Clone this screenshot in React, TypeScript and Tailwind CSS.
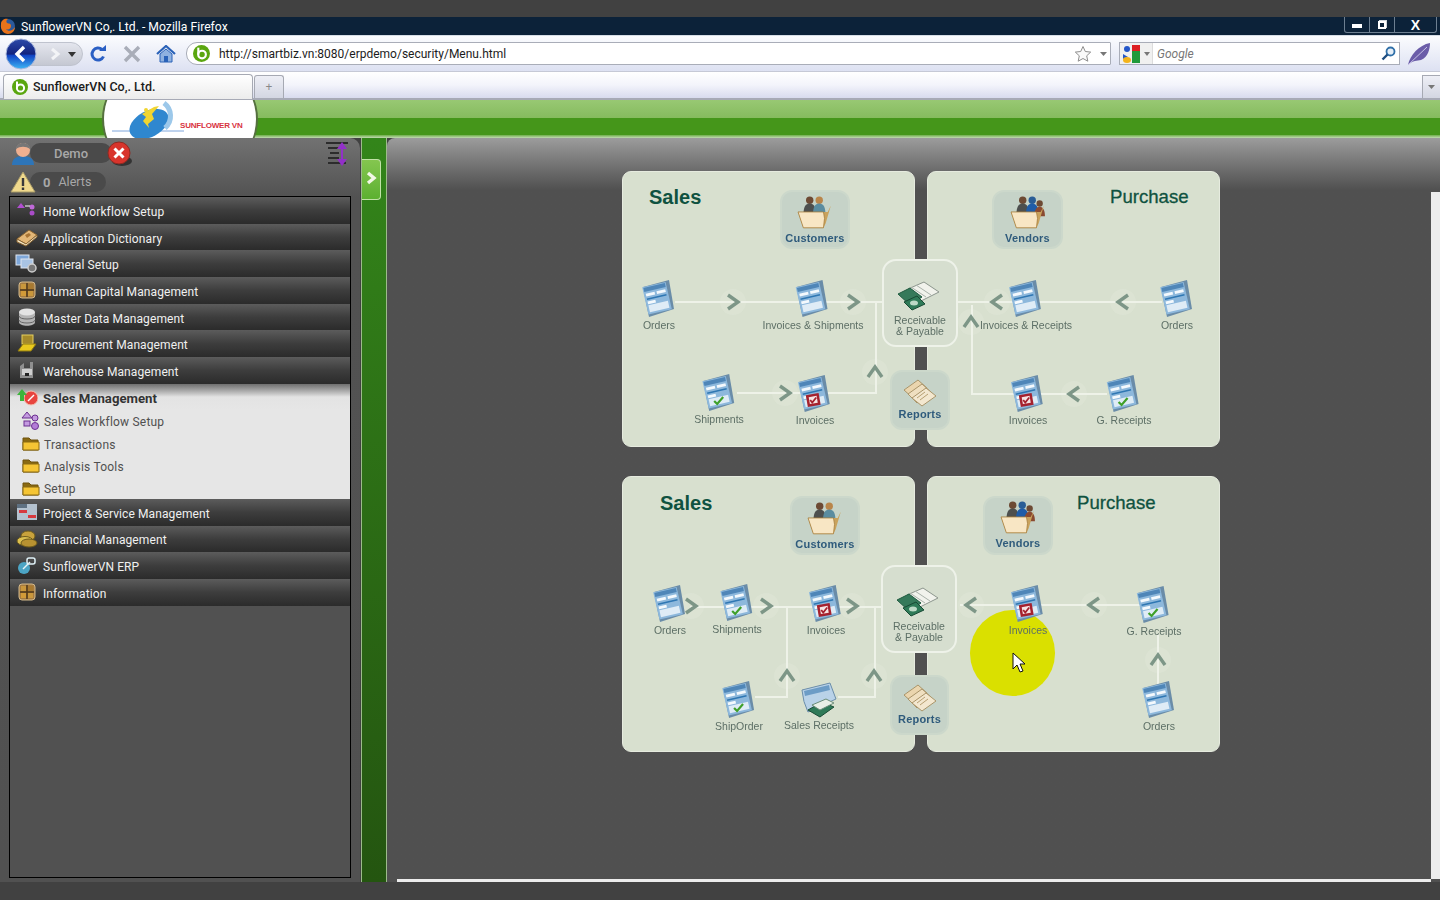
import type { ReactNode } from "react"

const UI = "font-['Roboto',sans-serif]"
const ARIAL = "font-['Liberation_Sans',sans-serif]"

function Favicon({ size = 16 }: { size?: number }) {
  return (
    <svg width={size} height={size} viewBox="0 0 16 16">
      <circle cx="8" cy="8" r="8" fill="#5aa60f" />
      <circle cx="8.5" cy="9" r="3.6" fill="none" stroke="#fff" strokeWidth="2" />
      <path d="M5 2.5V9" stroke="#fff" strokeWidth="2" />
    </svg>
  )
}

function FirefoxIcon() {
  return (
    <svg width="16" height="16" viewBox="0 0 16 16">
      <circle cx="8" cy="8" r="7" fill="#2c5a9c" />
      <path d="M1 6C1 2 5 0 8 1c-2 1-2 3-1 4 2 1 4 0 4 3s-3 4-5 3c2 3 7 2 9-2 0 4-3 7-7 7S0 12 1 6Z" fill="#e8731a" />
    </svg>
  )
}

function WindowControls() {
  return (
    <div className="flex h-[16px] border border-t-0 border-[#6d7f91] rounded-b-[3px] mr-[3px] w-[93px]">
      <div className="w-[25px] flex items-center justify-center border-r border-[#6d7f91]">
        <div className="w-[10px] h-[4px] mt-[3px] bg-white" />
      </div>
      <div className="w-[25px] flex items-center justify-center border-r border-[#6d7f91]">
        <div className="w-[8px] h-[8px] border-2 border-white shadow-[1px_-1px_0_#cfd6dc]" />
      </div>
      <div className={`flex-1 flex items-center justify-center text-white font-bold text-[14px] leading-none ${ARIAL}`}>X</div>
    </div>
  )
}

function NavButtons() {
  return (
    <div className="relative flex items-center w-[80px] h-[32px] ml-[5px]">
      <div className="absolute left-[10px] w-[68px] h-[24px] rounded-r-full bg-gradient-to-b from-[#e4e6ee] to-[#c5c8d2] border border-[#bfc3ce]" />
      <svg className="absolute left-[43px] top-[9px]" width="14" height="14" viewBox="0 0 14 14">
        <path d="M4 2l6 5-6 5" fill="none" stroke="#f3f4f7" strokeWidth="3" />
      </svg>
      <svg className="absolute left-[63px] top-[14px]" width="8" height="5" viewBox="0 0 8 5">
        <path d="M0 0h8L4 5Z" fill="#333" />
      </svg>
      <svg className="relative" width="32" height="32" viewBox="0 0 32 32">
        <defs>
          <linearGradient id="backBlue" x1="0" y1="0" x2="0" y2="1">
            <stop offset="0" stopColor="#2d4aa8" />
            <stop offset="0.5" stopColor="#12237f" />
            <stop offset="0.55" stopColor="#1144c4" />
            <stop offset="1" stopColor="#3db6f5" />
          </linearGradient>
        </defs>
        <circle cx="16" cy="16" r="15" fill="url(#backBlue)" stroke="#a9b8dd" />
        <path d="M19 9l-7 7 7 7" fill="none" stroke="#fff" strokeWidth="3.4" />
      </svg>
    </div>
  )
}

function Toolbar() {
  return (
    <div className="h-[36px] flex items-center bg-gradient-to-b from-[#fbfcfe] to-[#dde1f2] border-b border-[#c6c9d6]">
      <NavButtons />
      <svg className="ml-[4px]" width="18" height="18" viewBox="0 0 18 18">
        <path d="M14.5 11.5A6 6 0 1 1 13 4.5" fill="none" stroke="#2a5fc4" strokeWidth="3" />
        <path d="M10 6h7V0Z" fill="#2a5fc4" />
      </svg>
      <svg className="ml-[16px]" width="18" height="18" viewBox="0 0 18 18">
        <path d="M2 2l14 14M16 2L2 16" stroke="#a9adb8" strokeWidth="3.4" />
      </svg>
      <svg className="ml-[15px]" width="20" height="18" viewBox="0 0 20 18">
        <path d="M1 9l9-8 9 8" fill="none" stroke="#2a62b8" strokeWidth="2.2" />
        <path d="M4 9l6-5 6 5v8H4Z" fill="#8fb1e0" stroke="#2a62b8" />
        <rect x="8" y="11" width="4" height="6" fill="#2a62b8" />
      </svg>
      <div className="ml-[10px] w-[925px] h-[23px] flex items-center bg-white border border-[#a9adb8] rounded-l-[11px] rounded-r-[1px]">
        <div className="ml-[6px]"><Favicon size={17} /></div>
        <span className={`ml-[9px] pt-[1px] text-[12px] text-[#1c1c1c] ${UI}`}>http://smartbiz.vn:8080/erpdemo/security/Menu.html</span>
        <svg className="ml-auto" width="18" height="18" viewBox="0 0 18 18">
          <path d="M9 1.5l2.3 5 5.4.6-4 3.7 1.1 5.4L9 13.500l-4.800 2.700 1.100-5.400-4-3.700 5.400-.6Z" fill="#fafafa" stroke="#8e8e8e" />
        </svg>
        <svg className="ml-[8px] mr-[3px]" width="7" height="4" viewBox="0 0 7 4">
          <path d="M0 0h7L3.500 4Z" fill="#777" />
        </svg>
      </div>
      <div className="ml-[8px] w-[281px] h-[23px] flex items-center bg-white border border-[#a9adb8]">
        <div className="w-[33px] h-full flex items-center bg-[#f0f0f0] border-r border-[#dcdcdc]">
          <svg className="ml-[3px]" width="17" height="18" viewBox="0 0 17 18">
            <rect x="9" y="0" width="8" height="6" fill="#dd1e22" />
            <rect x="9" y="6" width="8" height="12" fill="#1f9a3a" />
            <circle cx="4" cy="4" r="3" fill="#2356c9" />
            <path d="M0 9l5 3-5 2Z" fill="#2356c9" />
            <ellipse cx="4" cy="15" rx="4" ry="3" fill="#f3b31b" />
          </svg>
          <svg className="ml-[4px]" width="6" height="4" viewBox="0 0 6 4">
            <path d="M0 0h6L3 4Z" fill="#777" />
          </svg>
        </div>
        <span className={`ml-[4px] pt-[1px] text-[12px] italic text-[#777] ${UI}`}>Google</span>
        <svg className="ml-auto mr-[3px]" width="15" height="15" viewBox="0 0 15 15">
          <circle cx="9.500" cy="5.500" r="4" fill="#e5eef7" stroke="#2f6fa8" strokeWidth="1.800" />
          <path d="M6.500 8.500L1.500 13.500" stroke="#1d4d80" strokeWidth="2.400" />
        </svg>
      </div>
      <svg className="ml-[7px]" width="24" height="24" viewBox="0 0 24 24">
        <path d="M1 23C3 13 12 3 23 1c0 6-2 14-9 17-4 1-8 0-13 5Z" fill="#6a5ca8" />
        <path d="M1 23L20 5" stroke="#c7c1e6" />
      </svg>
    </div>
  )
}

function TabBar() {
  return (
    <div className="h-[28px] flex items-end bg-gradient-to-b from-[#ffffff] via-[#f3f4fb] to-[#d8dbee] border-b-2 border-[#a7aab6] pl-[3px] relative">
      <div className="w-[250px] h-[25px] -mb-[1px] flex items-center bg-gradient-to-b from-[#ffffff] to-[#ececec] border border-b-0 border-[#a6a9b3] rounded-t-[4px] pl-[8px]">
        <Favicon />
        <span className={`ml-[5px] text-[12.5px] font-medium text-[#1b1b1b] ${UI}`}>SunflowerVN Co,. Ltd.</span>
      </div>
      <div className="w-[30px] h-[23px] ml-[1px] flex items-center justify-center bg-gradient-to-b from-[#eeeff6] to-[#d3d6e2] border border-b-0 border-[#a6a9b3] rounded-t-[3px] text-[#888] text-[12px]">+</div>
      <div className="ml-auto w-[18px] h-[23px] flex items-center justify-center bg-gradient-to-b from-[#eeeff6] to-[#d3d6e2] border border-r-0 border-b-0 border-[#a6a9b3]">
        <svg width="7" height="4" viewBox="0 0 7 4"><path d="M0 0h7L3.500 4Z" fill="#777" /></svg>
      </div>
    </div>
  )
}

function AppHeader() {
  return (
    <div className="h-[38px] flex flex-col overflow-hidden">
      <div className="h-[18px] bg-gradient-to-b from-[#98c873] to-[#86bb5e]" />
      <div className="flex-1 bg-[#45961a]" />
      <div className="h-[3px] bg-gradient-to-b from-[#6fae48] to-[#c3dbb3]" />
    </div>
  )
}

function Logo() {
  return (
    <div className="absolute left-[102px] top-0 w-[156px] h-[38px] overflow-hidden">
      <div className="w-[156px] h-[130px] -mt-[46px] bg-white rounded-[50%] border-x-2 border-[#55703f]" />
      <svg className="absolute left-0 top-0" width="156" height="38" viewBox="0 0 156 38">
        <path d="M10 31h72" stroke="#7fa6dc" />
        <ellipse cx="47" cy="24" rx="21" ry="13" fill="#2f87cf" transform="rotate(-28 47 24)" />
        <path d="M62 3c8 6 9 18 1 25" fill="none" stroke="#9cc8ea" strokeWidth="5" />
        <path d="M40 14l12-7 5-1-7 8 2 5-6 5 1 4-6-7 3-4Z" fill="#f1d530" />
        <circle cx="44" cy="10" r="2" fill="#f1d530" />
      </svg>
      <span className={`absolute left-[78px] top-[21px] text-[8px] leading-[10px] font-bold text-[#d8333f] whitespace-nowrap tracking-[-0.2px] ${ARIAL}`}>SUNFLOWER VN</span>
    </div>
  )
}

/* sidebar icons */
const icons: Record<string, ReactNode> = {
  workflow: (
    <svg width="20" height="20" viewBox="0 0 20 20">
      <path d="M4 3l4 5H0Z" fill="#b14fd0" />
      <circle cx="15" cy="7" r="2.500" fill="#c06ad8" />
      <circle cx="15" cy="13" r="2.500" fill="#a94cc8" />
      <path d="M8 6h5" stroke="#fff" />
    </svg>
  ),
  book: (
    <svg width="22" height="20" viewBox="0 0 22 20">
      <path d="M1 12L13 3l8 5-11 9Z" fill="#e3b777" stroke="#8a6430" />
      <path d="M1 12v3l9 4 11-9V8L10 17Z" fill="#f2e4c4" stroke="#8a6430" />
      <path d="M9 8l4-2 2 2-4 3Z" fill="#a87434" />
    </svg>
  ),
  setup: (
    <svg width="24" height="20" viewBox="0 0 24 20">
      <rect x="1" y="1" width="13" height="10" fill="#7ea7d9" stroke="#dfe6ef" />
      <rect x="6" y="5" width="12" height="9" fill="#a9c4e4" stroke="#dfe6ef" />
      <circle cx="17" cy="14" r="4" fill="#777" stroke="#ccc" strokeWidth="1.500" />
    </svg>
  ),
  box: (
    <svg width="20" height="20" viewBox="0 0 20 20">
      <rect x="2" y="2" width="16" height="16" rx="3" fill="#a67b3f" stroke="#d2b98c" />
      <path d="M10 3v14M3 10h14" stroke="#4f3719" strokeWidth="1.500" />
      <rect x="4" y="4" width="5" height="5" fill="#c9973c" />
      <rect x="11" y="11" width="5" height="5" fill="#c9973c" />
      <rect x="4" y="11" width="5" height="5" fill="#d29a38" />
      <rect x="11" y="4" width="5" height="5" fill="#a87a30" />
    </svg>
  ),
  db: (
    <svg width="20" height="20" viewBox="0 0 20 20">
      <path d="M2 5v10c0 5 16 5 16 0V5Z" fill="#b5b5b5" />
      <ellipse cx="10" cy="5" rx="8" ry="3.500" fill="#e4e4e4" />
      <path d="M2 9c0 4 16 4 16 0M2 13c0 4 16 4 16 0" fill="none" stroke="#666" />
    </svg>
  ),
  procure: (
    <svg width="20" height="20" viewBox="0 0 20 20">
      <rect x="5" y="1" width="11" height="9" fill="#a58a2a" stroke="#e5cf5f" />
      <path d="M1 17l5-7h13l-5 7Z" fill="#e9c91d" stroke="#8f7a10" />
    </svg>
  ),
  house: (
    <svg width="20" height="20" viewBox="0 0 20 20">
      <path d="M3 6l4-3v5h6V2h3v16H3Z" fill="#8f8f8f" />
      <rect x="5" y="9" width="10" height="6" fill="#cfcfcf" />
      <rect x="8" y="13" width="4" height="3" fill="#222" />
    </svg>
  ),
  sales: (
    <svg width="22" height="18" viewBox="0 0 22 18">
      <circle cx="15" cy="10" r="7" fill="#e8453f" stroke="#f2c1b0" />
      <path d="M12 13l6-6" stroke="#fff" strokeWidth="1.500" />
      <path d="M1 7l5-6 5 6H8v6H4V7Z" fill="#3db53a" />
    </svg>
  ),
  project: (
    <svg width="22" height="18" viewBox="0 0 22 18">
      <rect x="1" y="1" width="20" height="16" fill="#b4c2cf" />
      <rect x="3" y="7" width="8" height="3" fill="#d63a3f" />
      <rect x="12" y="12" width="8" height="3" fill="#d63a3f" />
      <rect x="1" y="1" width="10" height="4" fill="#5f7182" />
    </svg>
  ),
  money: (
    <svg width="22" height="20" viewBox="0 0 22 20">
      <ellipse cx="12" cy="7" rx="7" ry="5" fill="#c8a23c" stroke="#6d5b1c" />
      <ellipse cx="9" cy="12" rx="8" ry="4.500" fill="#dcc050" stroke="#6d5b1c" />
      <ellipse cx="13" cy="14" rx="8" ry="4" fill="#b89231" stroke="#6d5b1c" />
    </svg>
  ),
  link: (
    <svg width="20" height="20" viewBox="0 0 20 20">
      <circle cx="7" cy="12" r="6" fill="#4ca5c5" />
      <rect x="10" y="2" width="8" height="6" rx="2" fill="none" stroke="#dff1f7" strokeWidth="1.500" />
      <path d="M6 13l7-7" stroke="#e6f4f8" strokeWidth="1.500" />
    </svg>
  ),
  subflow: (
    <svg width="20" height="20" viewBox="0 0 20 20">
      <path d="M6 1l5 6H1Z" fill="#c49be0" stroke="#6b2f8f" />
      <circle cx="14" cy="7" r="3" fill="#c49be0" stroke="#6b2f8f" />
      <rect x="3" y="10" width="6" height="5" fill="#c49be0" stroke="#6b2f8f" />
      <circle cx="14" cy="15" r="3.500" fill="#b37cd6" stroke="#6b2f8f" />
    </svg>
  ),
  folder: (
    <svg width="18" height="16" viewBox="0 0 18 16">
      <path d="M1 3h6l2 2h7v10H1Z" fill="#8a6a12" stroke="#6e520c" />
      <path d="M1 7h16v8H1Z" fill="#f5c534" stroke="#8a6a12" />
    </svg>
  ),
}

function MenuRow({ icon, label }: { icon: string; label: string }) {
  return (
    <div className="h-[26.7px] flex items-center bg-gradient-to-b from-[#5c5c5c] via-[#3d3d3d] to-[#2b2b2b]">
      <div className="w-[33px] flex justify-center">{icons[icon]}</div>
      <span className={`pt-[3px] text-[12px] text-[#f0f0f0] tracking-[0.1px] ${UI}`}>{label}</span>
    </div>
  )
}

function SubRow({ icon, label }: { icon: string; label: string }) {
  return (
    <div className="h-[22.25px] flex items-center">
      <div className="w-[34px] pl-[8px] flex justify-center">{icons[icon]}</div>
      <span className={`pt-[3px] text-[12px] text-[#505050] tracking-[0.2px] ${UI}`}>{label}</span>
    </div>
  )
}

function Sidebar() {
  return (
    <div className="w-[360px] h-full flex flex-col bg-gradient-to-b from-[#727272] via-[#525252] via-[8%] to-[#515151] rounded-tr-[10px]">
      <div className="h-[29px] flex items-center relative">
        <div className={`absolute left-[30px] top-[5px] w-[82px] h-[20px] pt-[1px] rounded-[10px] bg-[#4a4a4a] flex items-center justify-center text-[13px] font-medium text-[#a8a8a8] ${UI}`}>Demo</div>
        <svg className="absolute left-[11px] top-[3px]" width="24" height="25" viewBox="0 0 24 25">
          <path d="M1 24c0-7 5-9 11-9s11 2 11 9Z" fill="#2e75b8" />
          <circle cx="12" cy="9" r="7" fill="#f0b090" />
          <path d="M5 8c0-8 14-8 14 0-4-3-10-3-14 0Z" fill="#777" />
        </svg>
        <svg className="absolute left-[107px] top-[3px]" width="26" height="26" viewBox="0 0 26 26">
          <ellipse cx="15" cy="20" rx="10" ry="5" fill="#333" />
          <circle cx="12" cy="12" r="11" fill="#d8342c" stroke="#8f2a22" />
          <path d="M7.500 7.500l9 9M16.500 7.500l-9 9" stroke="#fff" strokeWidth="3" />
        </svg>
        <svg className="absolute left-[325px] top-[3px]" width="24" height="26" viewBox="0 0 24 26">
          <path d="M1 2h22M3 7h11M5 12h9M3 17h11M3 22h18" stroke="#2c2c2c" strokeWidth="2" />
          <path d="M17 1l-5 7h4v10h-4l5 7 5-7h-4V8h4Z" fill="#9230c8" />
        </svg>
      </div>
      <div className="h-[30px] relative">
        <div className={`absolute left-[30px] top-[5px] w-[76px] h-[20px] pt-[1px] rounded-[10px] bg-[#4a4a4a] flex items-center text-[12.5px] text-[#a8a8a8] ${UI}`}>
          <span className="ml-[13px] font-bold text-[13px]">0</span>
          <span className="ml-[8px]">Alerts</span>
        </div>
        <svg className="absolute left-[10px] top-[4px]" width="26" height="22" viewBox="0 0 26 22">
          <path d="M13 1l12 20H1Z" fill="#f0d98c" stroke="#a89a68" />
          <path d="M13 7v8M13 16.500v2.500" stroke="#3a3a3a" strokeWidth="2.400" />
        </svg>
      </div>
      <div className="ml-[9px] mr-[9px] mt-[-1px] h-[682px] border border-black bg-[#515151]">
        {["workflow|Home Workflow Setup", "book|Application Dictionary", "setup|General Setup", "box|Human Capital Management", "db|Master Data Management", "procure|Procurement Management", "house|Warehouse Management"].map((row) => (
          <MenuRow key={row} icon={row.split("|")[0]} label={row.split("|")[1]} />
        ))}
        <div className="bg-[#e6e6e6]">
          <div className="h-[26px] flex items-center bg-gradient-to-b from-[#6f6f6f] via-[#e3e3e3] via-[50%] to-[#e6e6e6]">
            <div className="w-[33px] flex justify-center">{icons.sales}</div>
            <span className={`pt-[4px] text-[13.2px] font-bold text-[#333] ${UI}`}>Sales Management</span>
          </div>
          <SubRow icon="subflow" label="Sales Workflow Setup" />
          <SubRow icon="folder" label="Transactions" />
          <SubRow icon="folder" label="Analysis Tools" />
          <SubRow icon="folder" label="Setup" />
        </div>
        {["project|Project & Service Management", "money|Financial Management", "link|SunflowerVN ERP", "box|Information"].map((row) => (
          <MenuRow key={row} icon={row.split("|")[0]} label={row.split("|")[1]} />
        ))}
      </div>
    </div>
  )
}

function GreenStrip() {
  return (
    <div className="ml-[1px] w-[26px] h-full relative bg-gradient-to-b from-[#33851a] to-[#245510] border-x border-[#9dbb8c]">
      <div className="absolute left-0 top-[21px] w-[19px] h-[41px] rounded-r-[4px] bg-gradient-to-b from-[#84c64f] to-[#5cb030] border border-l-0 border-[#c2e2a8] flex items-center justify-center">
        <svg className="mb-[4px]" width="13" height="14" viewBox="0 0 13 14">
          <path d="M3 2l6 5-6 5" fill="none" stroke="#f2f7e6" strokeWidth="3.400" />
        </svg>
      </div>
    </div>
  )
}

/* diagram icons */
function DocIcon({ mark }: { mark?: "check" | "invoice" }) {
  return (
    <svg className="blur-[0.3px]" width="38" height="40" viewBox="0 0 38 40">
      <path d="M5 9L31 2l5 29-25 8C9 30 7 20 5 9Z" fill="#6a8ca8" />
      <g transform="rotate(-13 20 20)">
        <rect x="7" y="6" width="24" height="28" fill="#8db8dc" />
        <rect x="8" y="7" width="22" height="4" fill="#4f86b8" />
        <rect x="9" y="13" width="9" height="3" fill="#f4f9fd" />
        <rect x="20" y="13" width="9" height="3" fill="#f4f9fd" />
        <rect x="9" y="18" width="20" height="1.500" fill="#2f77b3" />
        <rect x="9" y="21" width="8" height="3" fill="#f4f9fd" />
        <rect x="9" y="25" width="20" height="7" fill="#dfecf6" />
      </g>
      {mark === "check" && <path d="M16 29l3 3 6-7" fill="none" stroke="#3fa02a" strokeWidth="2.200" />}
      {mark === "invoice" && (
        <g>
          <rect x="13" y="21" width="13" height="12" fill="#a5222e" transform="rotate(-10 19 27)" />
          <rect x="15.500" y="23.500" width="8" height="7" fill="#f6e4e4" transform="rotate(-10 19 27)" />
          <path d="M16.500 27l2 2.500 4-5" fill="none" stroke="#a5222e" strokeWidth="1.800" />
        </g>
      )}
    </svg>
  )
}

function PeopleFolder({ vendors }: { vendors?: boolean }) {
  return (
    <svg className="blur-[0.3px]" width="36" height="36" viewBox="0 0 34 34">
      <circle cx="12" cy="5" r="3.500" fill="#6d4a34" />
      <path d="M6 20c0-9 2-12 6-12s6 3 6 12Z" fill="#4d4f4e" />
      <circle cx="21" cy="5" r="3.500" fill={vendors ? "#2a5d96" : "#b9854a"} />
      <path d="M15 20c0-9 2-12 6-12s6 3 6 12Z" fill={vendors ? "#1f5ca8" : "#5a8ca0"} />
      {vendors && <circle cx="28" cy="8" r="3" fill="#6d4a34" />}
      {vendors && <path d="M23 20c0-6 2-9 5-9s5 3 5 9Z" fill="#8a4a30" />}
      <path d="M1 16l5 15h19l2-4 5-17-3 6Z" fill="#c9a25c" />
      <path d="M1 16h24l1 6-1 9H6Z" fill="#f8e6c4" stroke="#a8803f" strokeWidth="0.800" />
    </svg>
  )
}

function MoneyIcon() {
  return (
    <svg className="blur-[0.3px] -translate-x-[2px]" width="44" height="30" viewBox="0 0 44 30">
      <path d="M12 8L28 1l15 10-18 9Z" fill="#f1f2ec" stroke="#8b948c" />
      <path d="M15 6l15 10M20 4l15 10" stroke="#a9b2aa" />
      <path d="M2 13l12-6 12 9-12 8Z" fill="#35795a" stroke="#1f5a40" />
      <path d="M8 21l13-6 8 8-13 6Z" fill="#2f7a58" stroke="#174a34" />
      <ellipse cx="18" cy="22" rx="4" ry="2.500" fill="#bcd9c6" />
    </svg>
  )
}

function PapersIcon() {
  return (
    <svg className="blur-[0.3px]" width="34" height="28" viewBox="0 0 34 28">
      <path d="M1 11L15 1l9 8-13 11Z" fill="#ead5ae" stroke="#a99469" />
      <path d="M5 15L19 5l9 8-14 11Z" fill="#efdfc0" stroke="#a99469" />
      <path d="M9 19l14-10 10 8-14 10Z" fill="#f3e7cf" stroke="#a99469" />
      <path d="M14 19l8-6M17 21l8-6" stroke="#b79f72" />
    </svg>
  )
}

function SalesReceiptIcon() {
  return (
    <svg className="blur-[0.3px]" width="38" height="36" viewBox="0 0 38 36">
      <path d="M2 8L30 1l6 16-28 13Q3 20 2 8Z" fill="#b9d2e8" stroke="#6a8ca8" />
      <path d="M4 9l25-6 1 5-25 6Z" fill="#6c9cc6" />
      <path d="M8 28l14-8 12 5-14 10Z" fill="#2f7a58" stroke="#174a34" />
      <path d="M12 23l14-6 8 4-14 7Z" fill="#e9efe6" stroke="#6a8c78" />
    </svg>
  )
}

function Node({ className, label, mark }: { className: string; label: string; mark?: "check" | "invoice" }) {
  return (
    <div className={`absolute -translate-x-1/2 flex flex-col items-center whitespace-nowrap ${className}`}>
      <div className="-translate-x-[2px]"><DocIcon mark={mark} /></div>
      <span className={`mt-[1px] text-[10.5px] leading-[13px] text-[#5d6f66] blur-[0.3px] ${ARIAL}`}>{label}</span>
    </div>
  )
}

function Tile({ className, label, children }: { className: string; label: string; children: ReactNode }) {
  return (
    <div className={`absolute flex flex-col items-center justify-end bg-[#c6d3c8] border-2 border-[#ccd8cb] rounded-[12px] ${className}`}>
      {children}
      <span className={`text-[11px] leading-[14px] font-bold text-[#2f5b7c] tracking-[0.2px] blur-[0.2px] ${ARIAL}`}>{label}</span>
    </div>
  )
}

function Hub({ className }: { className: string }) {
  return (
    <div className={`absolute w-[76px] h-[88px] flex flex-col items-center pt-[20px] bg-[#d6decf] border-2 border-[#eef2e9] rounded-[14px] ${className}`}>
      <MoneyIcon />
      <span className={`mt-[4px] text-[10.5px] leading-[11px] text-center text-[#5d6f66] font-medium blur-[0.2px] ${ARIAL}`}>Receivable<br />& Payable</span>
    </div>
  )
}

function Arrow({ x, y, dir }: { x: number; y: number; dir: "r" | "l" | "u" }) {
  const d =
    dir === "r"
      ? `M${x - 5} ${y - 7}L${x + 5} ${y}L${x - 5} ${y + 7}`
      : dir === "l"
        ? `M${x + 5} ${y - 7}L${x - 5} ${y}L${x + 5} ${y + 7}`
        : `M${x - 7} ${y + 5}L${x} ${y - 5}L${x + 7} ${y + 5}`
  return (
    <g>
      <circle cx={x} cy={y} r="13" fill="#eef2e9" opacity="0.18" />
      <path d={d} fill="none" stroke="#7d9687" strokeWidth="3.400" />
    </g>
  )
}

function Card() {
  return <div className="w-[293px] h-[276px] bg-[#d8e0cf] border border-[#e6ebdf] rounded-[9px]" />
}

function DiagramTop() {
  return (
    <div className="relative w-[598px] h-[276px] grid grid-cols-2 gap-x-[12px]">
      <Card />
      <Card />
      <svg className="absolute left-0 top-0" width="598" height="276" viewBox="0 0 598 276">
        <path d="M53 131H260M254 131V222H115M336 131H540M350 134V223H485" fill="none" stroke="#eef2e8" strokeWidth="2" />
        <Arrow x={111} y={131} dir="r" />
        <Arrow x={231} y={131} dir="r" />
        <Arrow x={163} y={222} dir="r" />
        <Arrow x={253} y={201} dir="u" />
        <Arrow x={375} y={131} dir="l" />
        <Arrow x={501} y={131} dir="l" />
        <Arrow x={452} y={223} dir="l" />
        <Arrow x={349} y={151} dir="u" />
      </svg>
      <span className={`absolute left-[27px] top-[14px] text-[20px] leading-[24px] font-bold text-[#0f5240] ${ARIAL}`}>Sales</span>
      <span className={`absolute left-[488px] top-[14px] text-[18.6px] leading-[24px] text-[#0f5240] [-webkit-text-stroke:0.3px_#0f5240] ${ARIAL}`}>Purchase</span>
      <Tile className="left-[158px] top-[19px] w-[70px] h-[59px] pb-[2px]" label="Customers"><PeopleFolder /></Tile>
      <Tile className="left-[370px] top-[19px] w-[71px] h-[59px] pb-[2px]" label="Vendors"><PeopleFolder vendors /></Tile>
      <Node className="left-[37px] top-[107px]" label="Orders" />
      <Node className="left-[191px] top-[107px]" label="Invoices & Shipments" />
      <Node className="left-[97px] top-[201px]" label="Shipments" mark="check" />
      <Node className="left-[193px] top-[202px]" label="Invoices" mark="invoice" />
      <Node className="left-[404px] top-[107px]" label="Invoices & Receipts" />
      <Node className="left-[555px] top-[107px]" label="Orders" />
      <Node className="left-[406px] top-[202px]" label="Invoices" mark="invoice" />
      <Node className="left-[502px] top-[202px]" label="G. Receipts" mark="check" />
      <Hub className="left-[260px] top-[88px]" />
      <Tile className="left-[268px] top-[199px] w-[60px] h-[60px] pb-[7px]" label="Reports"><PapersIcon /></Tile>
    </div>
  )
}

function DiagramBottom() {
  return (
    <div className="relative w-[598px] h-[276px] grid grid-cols-2 gap-x-[12px]">
      <Card />
      <Card />
      <div className="absolute left-[348px] top-[134px] w-[85px] h-[86px] rounded-full bg-[#dae000]" />
      <svg className="absolute left-0 top-0" width="598" height="276" viewBox="0 0 598 276">
        <path d="M68 131H260M165 131V221H133M253 131V221H216M338 129H518M536 159V209" fill="none" stroke="#eef2e8" strokeWidth="2" />
        <Arrow x={69} y={130} dir="r" />
        <Arrow x={144} y={130} dir="r" />
        <Arrow x={230} y={130} dir="r" />
        <Arrow x={165} y={200} dir="u" />
        <Arrow x={252} y={200} dir="u" />
        <Arrow x={349} y={129} dir="l" />
        <Arrow x={472} y={129} dir="l" />
        <Arrow x={536} y={184} dir="u" />
      </svg>
      <span className={`absolute left-[38px] top-[15px] text-[20px] leading-[24px] font-bold text-[#0f5240] ${ARIAL}`}>Sales</span>
      <span className={`absolute left-[455px] top-[15px] text-[18.6px] leading-[24px] text-[#0f5240] [-webkit-text-stroke:0.3px_#0f5240] ${ARIAL}`}>Purchase</span>
      <Tile className="left-[168px] top-[20px] w-[70px] h-[59px] pb-[2px]" label="Customers"><PeopleFolder /></Tile>
      <Tile className="left-[361px] top-[20px] w-[70px] h-[59px] pb-[3px]" label="Vendors"><PeopleFolder vendors /></Tile>
      <Node className="left-[48px] top-[107px]" label="Orders" />
      <Node className="left-[115px] top-[106px]" label="Shipments" mark="check" />
      <Node className="left-[204px] top-[107px]" label="Invoices" mark="invoice" />
      <Node className="left-[117px] top-[203px]" label="ShipOrder" mark="check" />
      <div className="absolute left-[197px] -translate-x-1/2 top-[206px] flex flex-col items-center whitespace-nowrap">
        <SalesReceiptIcon />
        <span className={`mt-[1px] text-[10.5px] leading-[13px] text-[#5d6f66] blur-[0.3px] ${ARIAL}`}>Sales Receipts</span>
      </div>
      <Node className="left-[406px] top-[107px]" label="Invoices" mark="invoice" />
      <Node className="left-[532px] top-[108px]" label="G. Receipts" mark="check" />
      <Node className="left-[537px] top-[203px]" label="Orders" />
      <Hub className="left-[259px] top-[89px]" />
      <Tile className="left-[268px] top-[199px] w-[59px] h-[60px] pb-[7px]" label="Reports"><PapersIcon /></Tile>
      <svg className="absolute left-[390px] top-[176px]" width="14" height="21" viewBox="0 0 14 21">
        <path d="M1 1v16l4-4 3 7 3-1-3-7h5Z" fill="#fff" stroke="#111" />
      </svg>
    </div>
  )
}

function MainArea() {
  return (
    <div className="flex-1 h-full flex flex-col bg-gradient-to-b from-[#9c9c9c] via-[#505050] via-[7%] to-[#505050] rounded-tl-[8px]">
      <div className="flex-1 flex min-h-0">
        <div className="flex-1 flex flex-col gap-[29px] pt-[33px] pl-[235px]">
          <DiagramTop />
          <DiagramBottom />
        </div>
        <div className="w-[9px] mt-[54px] bg-[#ececec]" />
      </div>
      <div className="h-[3px] ml-[10px] mr-[9px] bg-[#ececec]" />
    </div>
  )
}

export default function App() {
  return (
    <div className="w-[1440px] h-[900px] flex flex-col overflow-hidden bg-[#414141]">
      <div className="h-[17px]" />
      <div className="h-[19px] flex items-start justify-between bg-[#0c2239] border-b border-[#d6dde6]">
        <div className="flex items-center h-[18px]">
          <FirefoxIcon />
          <span className={`ml-[5px] pt-[2px] text-[12.2px] text-white ${UI}`}>SunflowerVN Co,. Ltd. - Mozilla Firefox</span>
        </div>
        <WindowControls />
      </div>
      <Toolbar />
      <TabBar />
      <div className="relative">
        <AppHeader />
        <Logo />
      </div>
      <div className="h-[744px] flex">
        <Sidebar />
        <GreenStrip />
        <MainArea />
      </div>
    </div>
  )
}
